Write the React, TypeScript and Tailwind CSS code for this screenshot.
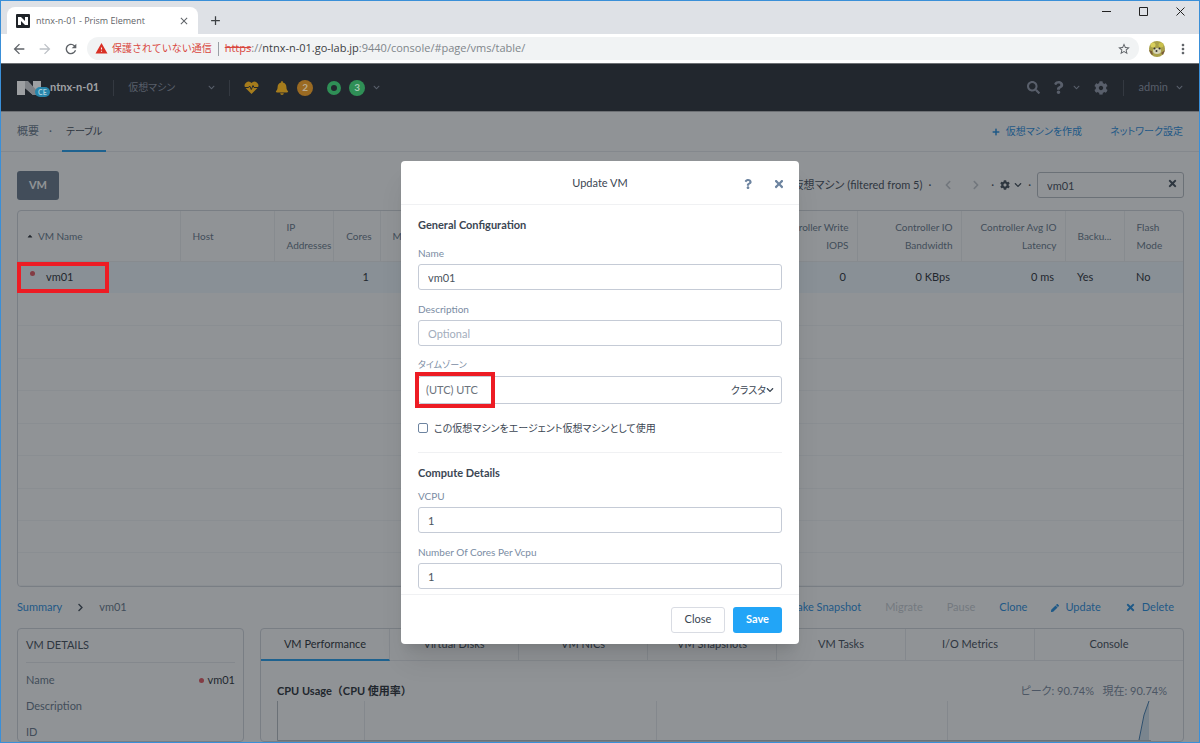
import type { ReactNode } from 'react'
import { FaBell, FaCaretUp, FaChevronDown, FaChevronLeft, FaChevronRight, FaCog, FaPen, FaPlus, FaQuestion, FaSearch, FaTimes } from 'react-icons/fa'
import { MdAdd, MdArrowBack, MdArrowForward, MdClose, MdMoreVert, MdRefresh, MdStarBorder, MdWarning } from 'react-icons/md'

const columns = [
  { label: 'VM Name', width: 'w-[162px]', align: 'text-left' },
  { label: 'Host', width: 'w-[94px]', align: 'text-left' },
  { label: 'IP Addresses', width: 'w-[59px]', align: 'text-left' },
  { label: 'Cores', width: 'w-[47px]', align: 'text-right' },
  { label: 'Memory', width: '', align: 'text-left' },
  { label: 'CPU Usage', width: '', align: 'text-right' },
  { label: 'Memory Usage', width: '', align: 'text-right' },
  { label: 'Controller Read IOPS', width: '', align: 'text-right' },
  { label: 'Controller Write IOPS', width: 'w-[98px]', align: 'text-right' },
  { label: 'Controller IO Bandwidth', width: 'w-[104px]', align: 'text-right' },
  { label: 'Controller Avg IO Latency', width: 'w-[104px]', align: 'text-right' },
  { label: 'Backu...', width: 'w-[59px]', align: 'text-left' },
  { label: 'Flash Mode', width: 'w-[59px]', align: 'text-left' },
]

const vm = ['vm01', '', '', '1', '', '', '', '', '0', '0 KBps', '0 ms', 'Yes', 'No']

const tabs = ['VM Performance', 'Virtual Disks', 'VM NICs', 'VM Snapshots', 'VM Tasks', 'I/O Metrics', 'Console']

function BrowserBar() {
  return (
    <div className="shrink-0 bg-[#dee1e6] font-['Open_Sans','Noto_Sans_CJK_JP',sans-serif]">
      <div className="flex h-[33px] items-end pl-1.5">
        <div className="flex h-[27px] w-[191px] items-center rounded-t-lg bg-white px-2">
          <svg className="ml-px h-3.5 w-3.5" viewBox="0 0 14 14" aria-hidden="true">
            <rect width="14" height="14" rx="1" fill="#1f2328" />
            <path d="M2 3h3l4 4V3h3v8H9L5 7v4H2z" fill="#fff" />
          </svg>
          <span className="ml-1.5 flex-1 text-[9px] text-[#5f6368]">ntnx-n-01 - Prism Element</span>
          <button aria-label="Close tab" className="text-[#5f6368]"><MdClose size={12} /></button>
        </div>
        <button aria-label="New tab" className="mb-1.5 ml-2.5 text-[#3c4043]"><MdAdd size={15} /></button>
        <div className="ml-auto flex items-center gap-7 self-start pt-1.5 pr-3.5">
          <button aria-label="Minimize">
            <svg width="9" height="9" viewBox="0 0 9 9"><path d="M0 4.5h9" stroke="#222" /></svg>
          </button>
          <button aria-label="Maximize">
            <svg width="9" height="9" viewBox="0 0 9 9"><path d="M.5.5h8v8h-8z" stroke="#222" fill="none" /></svg>
          </button>
          <button aria-label="Close window">
            <svg width="9" height="9" viewBox="0 0 9 9"><path d="M.5.5l8 8M8.5.5l-8 8" stroke="#222" /></svg>
          </button>
        </div>
      </div>
      <div className="flex h-[29px] items-center bg-white pr-2 pl-2.5 text-[#5f6368]">
        <button aria-label="Back"><MdArrowBack size={16} /></button>
        <button aria-label="Forward" className="ml-2.5 text-[#bdc1c6]"><MdArrowForward size={16} /></button>
        <button aria-label="Reload" className="ml-2.5"><MdRefresh size={16} /></button>
        <div className="ml-2 flex h-[23px] flex-1 items-center rounded-full bg-[#f1f3f4] px-2 text-[11px]">
          <MdWarning size={13} className="text-[#d93025]" />
          <span className="ml-1 text-[10px] text-[#d9473e]">保護されていない通信</span>
          <span className="mx-1.5 h-3.5 w-px bg-[#9aa0a6]" />
          <span className="text-[#80868b]">
            <s className="text-[#d9473e]">https</s>://<span className="text-[#3c4043]">ntnx-n-01.go-lab.jp</span>:9440/console/#page/vms/table/
          </span>
          <button aria-label="Bookmark" className="ml-auto"><MdStarBorder size={14} /></button>
        </div>
        <svg className="ml-2.5 h-4 w-4" viewBox="0 0 16 16" aria-hidden="true">
          <circle cx="8" cy="8" r="8" fill="#a9a04a" />
          <circle cx="4" cy="4" r="2.5" fill="#d8cf5d" />
          <circle cx="12" cy="4" r="2.5" fill="#c9c04b" />
          <ellipse cx="8" cy="10" rx="4" ry="3" fill="#d5d3b6" />
          <path d="M0 9l3 1 1 4-2-1zM12 12l4-3-2 5z" fill="#7a5a3a" />
          <circle cx="5.5" cy="7.5" r="1" fill="#333" />
          <circle cx="10.5" cy="7.5" r="1" fill="#333" />
          <circle cx="7.5" cy="10" r="1" fill="#333" />
        </svg>
        <button aria-label="Menu" className="ml-2.5"><MdMoreVert size={16} /></button>
      </div>
    </div>
  )
}

function TopBar() {
  return (
    <header className="relative z-10 flex h-[49px] shrink-0 items-center border-t border-b border-[#6d7074] bg-[#22272e] px-4 text-[11px] text-[#595f6b]">
      <div className="relative h-4 w-[33px]">
        <svg className="h-4 w-6" viewBox="0 0 24 16" aria-hidden="true">
          <path d="M0 1h8l8 7V1h8v14h-8L8 8v7H0z" fill="#9d9fa2" />
          <path d="M8 1h3l13 14h-8L8 8z" fill="#7f8287" />
        </svg>
        <span className="absolute top-[7px] left-[18px] rounded-full bg-[#2785ab] px-[3px] text-[7px] leading-[10px] font-bold text-[#a9cfdd]">CE</span>
      </div>
      <span className="font-bold text-[#a0a2a5]">ntnx-n-01</span>
      <span className="mx-3.5 h-4 w-px bg-[#343941]" />
      <button className="flex w-[87px] items-center justify-between text-[10px]">仮想マシン<FaChevronDown size={7} /></button>
      <span className="mx-3.5 h-4 w-px bg-[#343941]" />
      <svg className="h-[15px] w-[15px]" viewBox="0 0 15 15" aria-hidden="true">
        <path d="M7.500 14L1.300 7.700A3.900 3.900 0 0 1 7.500 3a3.900 3.900 0 0 1 6.200 4.700z" fill="#a67c1c" />
        <path d="M0 7.500h4.500l1.200-1.500 1.600 3.500 1.700-4 1 2H15" stroke="#22272e" strokeWidth="1" fill="none" />
      </svg>
      <FaBell size={14} className="ml-4 text-[#a67c1c]" />
      <span className="ml-2 flex h-4 w-4 items-center justify-center rounded-full bg-[#9a6a22] text-[10px] font-bold text-[#b9aa90]">2</span>
      <span className="ml-3.5 h-3.5 w-3.5 rounded-full border-4 border-[#2f8f56]" />
      <span className="ml-2 flex h-4 w-4 items-center justify-center rounded-full bg-[#2f8f56] text-[10px] font-bold text-[#a5c9b3]">3</span>
      <FaChevronDown size={7} className="ml-2" />
      <div className="ml-auto flex items-center">
        <button aria-label="Search"><FaSearch size={13} /></button>
        <button aria-label="Help" className="ml-3 flex items-center gap-2"><FaQuestion size={13} /><FaChevronDown size={7} /></button>
        <button aria-label="Settings" className="ml-3.5"><FaCog size={14} /></button>
        <span className="mx-[15px] h-4 w-px bg-[#343941]" />
        <button className="flex items-center gap-2">admin<FaChevronDown size={7} /></button>
      </div>
    </header>
  )
}

function VmTable() {
  return (
    <div className="shrink-0 overflow-hidden rounded-sm border border-[#d0d4da]">
      <table className="h-[375px] w-full table-fixed border-collapse text-[10px]">
        <thead>
          <tr className="h-[50px] text-[#627386]">
            {columns.map((c, i) => (
              <th key={c.label} className={`${c.width} ${c.align} border-r border-[#eceef1] leading-[18px] font-normal last:border-r-0 ${c.align === 'text-left' ? 'pl-3' : 'pr-2'}`}>
                {i === 0 ? <span className="-ml-1 flex items-center gap-1"><FaCaretUp size={8} className="text-[#22272e]" />{c.label}</span> : c.label}
              </th>
            ))}
          </tr>
        </thead>
        <tbody>
          <tr className="h-[32px] border-t border-[#eceef1] bg-[#f1f8fe] text-[11px] text-[#22272e]">
            {vm.map((v, i) => (
              <td key={i} className={`${columns[i].align} ${columns[i].align === 'text-left' ? 'pl-3' : 'pr-[11px]'}`}>
                {i === 0 ? (
                  <div className="relative pl-4">
                    <span className="absolute top-0.5 left-0 h-[5px] w-[5px] rounded-full bg-[#e5505a]" />
                    {v}
                  </div>
                ) : v}
              </td>
            ))}
          </tr>
          {Array.from({ length: 9 }, (_, i) => (
            <tr key={i} className="h-[32px] border-b border-[#f2f4f6]"><td colSpan={13} /></tr>
          ))}
        </tbody>
      </table>
    </div>
  )
}

function Action({ children, disabled = false }: { children: ReactNode; disabled?: boolean }) {
  return (
    <button disabled={disabled} className="flex items-center gap-1.5 text-[#1b8ae0] disabled:text-[#c6cbd1]">
      {children}
    </button>
  )
}

function Details() {
  return (
    <section className="w-[227px] shrink-0 rounded-sm border border-[#d0d4da] px-2 text-[11px] text-[#627386]">
      <h2 className="flex h-[34px] items-center border-b border-[#e6e9ed] text-[#3b4653]">VM DETAILS</h2>
      <dl className="pt-1">
        <div className="flex h-[26px] items-center justify-between">
          <dt>Name</dt>
          <dd className="flex items-center gap-1 text-[#22272e]"><span className="h-[5px] w-[5px] rounded-full bg-[#e5505a]" />vm01</dd>
        </div>
        <div className="flex h-[26px] items-center"><dt>Description</dt></div>
        <div className="flex h-[26px] items-center"><dt>ID</dt></div>
      </dl>
    </section>
  )
}

function Performance() {
  return (
    <section className="min-w-0 flex-1 rounded-sm border border-[#d0d4da] text-[11px]">
      <div className="flex h-8 text-[#3b4653]">
        {tabs.map((t, i) => (
          <button
            key={t}
            className={`border-b last:flex-1 last:border-r-0 ${i === 0 ? 'w-[129px] border-r border-b-2 border-r-[#e6e9ed] border-b-[#1b9cf0] text-[#22272e]' : 'w-[129px] border-r border-[#e6e9ed]'}`}
          >
            {t}
          </button>
        ))}
      </div>
      <div className="px-4 pt-5">
        <div className="flex h-5 items-center justify-between">
          <h3 className="font-bold text-[#22272e] [font-feature-settings:normal]">CPU Usage（CPU 使用率）</h3>
          <span className="text-[#76859a]">ピーク: 90.74%&nbsp;&nbsp; 現在: 90.74%</span>
        </div>
        <svg className="h-10 w-full" viewBox="0 0 890 40" preserveAspectRatio="none" aria-hidden="true">
          <path d="M87.5 0v40M379.5 0v40M670.5 0v40" stroke="#e6e9ed" />
          <path d="M.5 0v39.5H874" stroke="#b5bac1" fill="none" />
          <path d="M862 39L867 14L872 0V39Z" fill="#d3e2ef" />
          <path d="M862 39L867 14L872 0" stroke="#3d79ae" fill="none" />
        </svg>
      </div>
    </section>
  )
}

const labelClass = 'block h-[18px] text-[10px] leading-[14px] text-[#7a8ca3]'
const inputClass = 'block h-[26px] w-full rounded-[3px] border border-[#c5cbd6] bg-white px-[9px] text-[11px] text-[#4b5460] placeholder:text-[#a3adbc]'

function Field({ id, label, value, placeholder }: { id: string; label: string; value?: string; placeholder?: string }) {
  return (
    <div className="mb-3">
      <label htmlFor={id} className={labelClass}>{label}</label>
      <input id={id} defaultValue={value} placeholder={placeholder} className={inputClass} />
    </div>
  )
}

function UpdateDialog() {
  return (
    <div role="dialog" aria-labelledby="dialog-title" className="flex h-[483px] w-[398px] flex-col overflow-hidden rounded bg-white text-[#3b4653] shadow-xl">
      <div className="relative flex h-11 shrink-0 items-center justify-center border-b border-[#f0f1f3] pt-0.5">
        <h2 id="dialog-title" className="text-[11px]">Update VM</h2>
        <div className="absolute right-3.5 flex items-center gap-5 text-[#6d84a0]">
          <button aria-label="Help"><FaQuestion size={10} /></button>
          <button aria-label="Close dialog"><FaTimes size={12} /></button>
        </div>
      </div>
      <div className="min-h-0 flex-1 overflow-hidden px-[17px] pt-3">
        <h3 className="mb-[13px] text-[11px] leading-4 font-bold">General Configuration</h3>
        <Field id="name" label="Name" value="vm01" />
        <Field id="description" label="Description" placeholder="Optional" />
        <label htmlFor="timezone" className="block h-[18px] text-[9px] leading-[14px] text-[#7a8ca3]">タイムゾーン</label>
        <div className="relative">
          <select id="timezone" className="h-7 w-full appearance-none rounded-[3px] border border-[#c5cbd6] bg-white px-[7px] text-[11px] text-[#6b727c]">
            <option>(UTC) UTC</option>
          </select>
          <span className="pointer-events-none absolute top-1.5 right-2 flex items-center text-[10px] leading-4">
            クラスタ<FaChevronDown size={8} />
          </span>
          <span className="pointer-events-none absolute -top-1 -left-[3px] h-9 w-20 border-4 border-[#ed1c24]" />
        </div>
        <div className="mt-4 flex h-4 items-center gap-1.5 text-[10px]">
          <input id="agent" type="checkbox" className="h-2.5 w-2.5 appearance-none rounded-xs border border-[#6d84a0]" />
          <label htmlFor="agent">この仮想マシンをエージェント仮想マシンとして使用</label>
        </div>
        <hr className="mt-4 mb-3 border-[#f0f1f3]" />
        <h3 className="mb-2 text-[11px] leading-4 font-bold">Compute Details</h3>
        <Field id="vcpu" label="VCPU" value="1" />
        <Field id="cores" label="Number Of Cores Per Vcpu" value="1" />
      </div>
      <div className="flex h-[50px] shrink-0 items-center justify-end gap-2 border-t border-[#f0f1f3] px-[17px] text-[11px]">
        <button className="h-[26px] w-[54px] rounded-[3px] border border-[#d9dce3]">Close</button>
        <button className="h-[26px] w-[49px] rounded-[3px] bg-[#22a5f7] font-bold text-white">Save</button>
      </div>
    </div>
  )
}

export default function App() {
  return (
    <div className="flex h-screen flex-col overflow-hidden border border-[#3a8fd8] bg-white">
      <BrowserBar />
      <div className="relative flex min-h-0 flex-1 flex-col font-['Lato','Noto_Sans_CJK_JP',sans-serif] [font-feature-settings:'palt']">
        <TopBar />
        <nav className="flex h-10 shrink-0 items-center border-b border-[#e6e9ed] px-4 text-[11px] text-[#627386]">
          <a href="#overview">概要</a>
          <span className="mx-2.5">·</span>
          <a href="#table" className="flex h-10 items-center border-b-2 border-[#1b9cf0] px-1 pt-0.5 text-[10px] text-[#3b4653]">テーブル</a>
          <div className="ml-auto flex items-center gap-7 text-[10px] text-[#1b8ae0]">
            <a href="#create" className="flex items-center gap-1.5"><FaPlus size={8} />仮想マシンを作成</a>
            <a href="#network">ネットワーク設定</a>
          </div>
        </nav>
        <main className="flex min-h-0 flex-1 flex-col overflow-hidden pr-[15px] pl-4">
          <div className="flex h-[58px] shrink-0 items-center pt-2 text-[11px]">
            <button className="h-[29px] w-[42px] rounded-[3px] bg-[#627386] font-bold text-white">VM</button>
            <div className="ml-auto flex items-center text-[#3b4653]">
              <span>1 仮想マシン (filtered from 5)</span>
              <span className="mx-1.5">·</span>
              <button aria-label="Previous page" className="mx-1.5 text-[#c2c6cc]"><FaChevronLeft size={10} /></button>
              <button aria-label="Next page" className="mr-1 ml-3 text-[#c2c6cc]"><FaChevronRight size={10} /></button>
              <span className="mx-1.5">·</span>
              <button aria-label="Table settings" className="flex items-center gap-1"><FaCog size={10} /><FaChevronDown size={8} /></button>
              <span className="mx-1.5">·</span>
              <div className="relative">
                <input aria-label="Search in table" defaultValue="vm01" className="h-[26px] w-[147px] rounded-[3px] border border-[#b5bac1] px-[9px]" />
                <button aria-label="Clear" className="absolute top-1.5 right-1.5"><FaTimes size={11} /></button>
              </div>
            </div>
          </div>
          <VmTable />
          <div className="flex h-[41px] shrink-0 items-center text-[11px]">
            <a href="#summary" className="text-[#1b8ae0]">Summary</a>
            <FaChevronRight size={9} className="mx-3.5 text-[#3b4653]" />
            <span className="text-[#627386]">vm01</span>
            <div className="ml-auto flex gap-6 pr-2.5">
              <Action>Take Snapshot</Action>
              <Action disabled>Migrate</Action>
              <Action disabled>Pause</Action>
              <Action>Clone</Action>
              <Action><FaPen size={8} />Update</Action>
              <Action><FaTimes size={11} />Delete</Action>
            </div>
          </div>
          <div className="flex min-h-0 flex-1 gap-4">
            <Details />
            <Performance />
          </div>
        </main>
        <div className="absolute inset-0 bg-[#22272e]/50" />
        {/* highlight round the selected VM */}
        <div className="absolute top-[199px] left-4 h-[31px] w-[92px] border-4 border-[#ed1c24]" />
        <div className="absolute inset-0 z-20 flex items-center justify-center">
          <UpdateDialog />
        </div>
      </div>
    </div>
  )
}
